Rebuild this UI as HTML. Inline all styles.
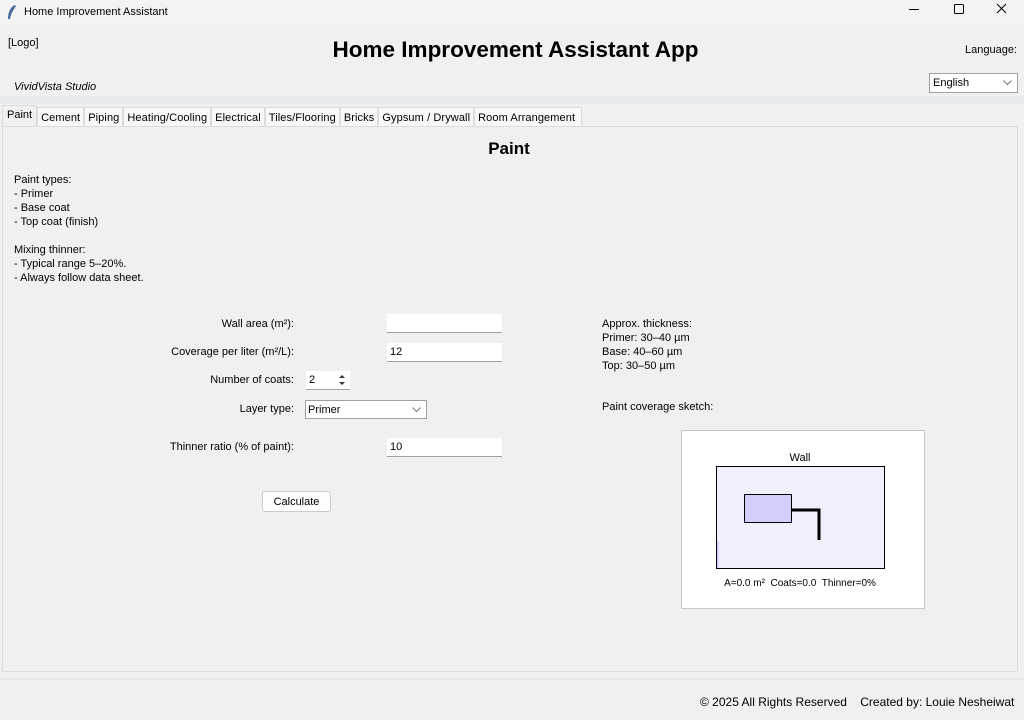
<!DOCTYPE html>
<html><head><meta charset="utf-8"><style>
*{margin:0;padding:0;box-sizing:border-box}
body{width:1024px;height:720px;background:#f0f0f0;font-family:"Liberation Sans",sans-serif;font-size:11px;color:#000;position:relative;overflow:hidden}
.a{position:absolute;white-space:nowrap}
.inp{position:absolute;background:#fff;border-bottom:1px solid #a0a0a0;height:19px;padding:3px 3px;font-size:11px}
.t{border:1px solid #dcdcdc;padding:4px 3px;height:20px;background:#f7f7f7;letter-spacing:0.1px}
</style></head><body>
<div class="a" style="left:0;top:0;width:1024px;height:25px;background:#f3f3f3"></div>
<svg class="a" style="left:6px;top:4px" width="12" height="16"><path d="M9 1 C4 3 2 9 2 15 L4 15 C5 9 8 5 10 2Z" fill="#4a6a9a"/></svg>
<div class="a" style="left:24px;top:6px;font-size:11px">Home Improvement Assistant</div>
<svg class="a" style="left:905px;top:0" width="110" height="22"><line x1="4" y1="9.5" x2="14" y2="9.5" stroke="#000"/><rect x="49.5" y="4.5" width="9" height="9" fill="none" stroke="#000" rx="1"/><path d="M92 4 L101 13 M101 4 L92 13" stroke="#000"/></svg>
<div class="a" style="left:0;top:96px;width:1024px;height:8px;background:#e8ebee"></div>
<div class="a" style="left:8px;top:37px;font-size:11px">[Logo]</div>
<div class="a" style="left:0;width:1031px;text-align:center;top:37px;font-size:22.5px;font-weight:bold">Home Improvement Assistant App</div>
<div class="a" style="left:965px;top:44px">Language:</div>
<div class="a" style="left:14px;top:81px;font-style:italic">VividVista Studio</div>
<div class="a" style="left:929px;top:73px;width:89px;height:20px;background:#fff;border:1px solid #a0a0a0;padding:3px 3px">English<svg class="a" style="right:5px;top:6px" width="9" height="6"><path d="M0.5 0.5 L4.5 4.5 L8.5 0.5" fill="none" stroke="#777"/></svg></div>
<div class="a" style="left:2px;top:126px;width:1016px;height:546px;border:1px solid #dcdcdc;background:#f0f0f0"></div>
<div class="a" style="left:2px;top:107px;display:flex;font-size:11px">
<div style="background:#f0f0f0;border:1px solid #dcdcdc;border-bottom:none;padding:3px 4px 4px;height:21px;margin-top:-2px">Paint</div>
<div class="t">Cement</div>
<div class="t">Piping</div>
<div class="t">Heating/Cooling</div>
<div class="t">Electrical</div>
<div class="t">Tiles/Flooring</div>
<div class="t">Bricks</div>
<div class="t">Gypsum / Drywall</div>
<div class="t" style="padding-right:6px">Room Arrangement</div>
</div>
<div class="a" style="left:0;width:1018px;text-align:center;top:139px;font-size:17px;font-weight:bold">Paint</div>
<div class="a" style="left:14px;top:173px;line-height:14px">Paint types:<br>- Primer<br>- Base coat<br>- Top coat (finish)<br><br>Mixing thinner:<br>- Typical range 5–20%.<br>- Always follow data sheet.</div>
<div class="a" style="right:730px;top:318px">Wall area (m²):</div>
<div class="a" style="right:730px;top:346px">Coverage per liter (m²/L):</div>
<div class="a" style="right:730px;top:374px">Number of coats:</div>
<div class="a" style="right:730px;top:403px">Layer type:</div>
<div class="a" style="right:730px;top:441px">Thinner ratio (% of paint):</div>
<div class="inp" style="left:387px;top:314px;width:115px"></div>
<div class="inp" style="left:387px;top:343px;width:115px">12</div>
<div class="inp" style="left:306px;top:371px;width:44px">2<svg class="a" style="left:31px;top:2px" width="10" height="14"><path d="M2 5 L5 2 L8 5Z M2 9 L5 12 L8 9Z" fill="#333"/></svg></div>
<div class="a" style="left:305px;top:400px;width:122px;height:19px;background:#fff;border:1px solid #a0a0a0;padding:3px 2px">Primer<svg class="a" style="right:5px;top:6px" width="9" height="6"><path d="M0.5 0.5 L4.5 4.5 L8.5 0.5" fill="none" stroke="#777"/></svg></div>
<div class="inp" style="left:387px;top:438px;width:115px">10</div>
<div class="a" style="left:262px;top:491px;width:69px;height:21px;background:#fdfdfd;border:1px solid #ccc;border-radius:3px;text-align:center;padding-top:4px">Calculate</div>
<div class="a" style="left:602px;top:317px;line-height:14px">Approx. thickness:<br>Primer: 30–40 µm<br>Base: 40–60 µm<br>Top: 30–50 µm</div>
<div class="a" style="left:602px;top:401px">Paint coverage sketch:</div>
<div class="a" style="left:681px;top:430px;width:244px;height:179px;background:#fff;border:1px solid #c8c8c8"></div>
<svg class="a" style="left:681px;top:430px" width="244" height="179">
<text x="119" y="31" font-family="Liberation Sans" font-size="11" text-anchor="middle">Wall</text>
<rect x="35.5" y="36.5" width="168" height="102" fill="#f0f0fd" stroke="#000"/>
<rect x="36" y="111" width="1.5" height="27" fill="#c8c8ff"/>
<rect x="63.5" y="64.5" width="47" height="28" fill="#d0d0fa" stroke="#000"/>
<path d="M110 80 L138 80 L138 110" fill="none" stroke="#000" stroke-width="3"/>
<text x="119" y="156" font-family="Liberation Sans" font-size="10" text-anchor="middle" xml:space="preserve">A=0.0 m²  Coats=0.0  Thinner=0%</text>
</svg>
<div class="a" style="left:0;top:678px;width:1024px;height:2px;background:#e6e6e6"></div>
<div class="a" style="left:700px;top:695px;font-size:12px">© 2025 All Rights Reserved&nbsp;&nbsp;&nbsp;&nbsp;Created by: Louie Nesheiwat</div>
</body></html>
